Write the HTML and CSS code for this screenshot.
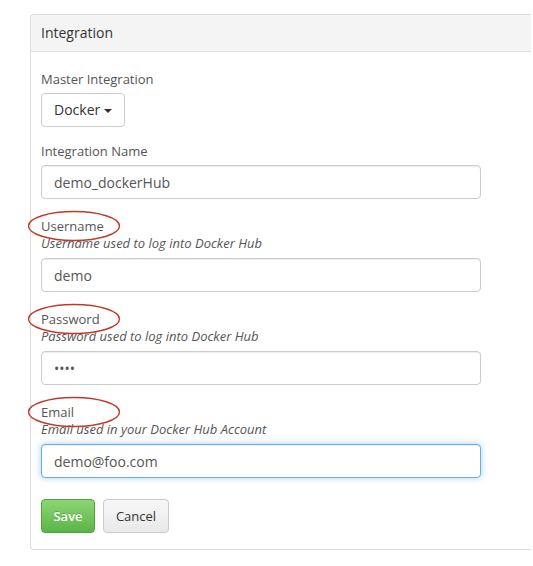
FILE: index.html
```html
<!DOCTYPE html>
<html>
<head>
<meta charset="utf-8">
<link rel="stylesheet" href="styles.css">
</head>
<body>
<div class="panel">
  <div class="panel-heading">Integration</div>
  <div class="panel-body">
    <div class="field field-select">
      <label class="lbl">Master Integration</label>
      <button class="btn btn-default dropdown">Docker<span class="caret"></span></button>
    </div>
    <div class="field">
      <label class="lbl">Integration Name</label>
      <input class="input" type="text" value="demo_dockerHub">
    </div>
    <div class="field">
      <label class="lbl lbl-tight"><span class="circle"><svg width="94" height="32" viewBox="0 0 94 32"><ellipse cx="47" cy="16" rx="45.5" ry="14.5"/></svg></span>Username</label>
      <div class="help">Username used to log into Docker Hub</div>
      <input class="input" type="text" value="demo">
    </div>
    <div class="field">
      <label class="lbl lbl-tight"><span class="circle"><svg width="94" height="32" viewBox="0 0 94 32"><ellipse cx="47" cy="16" rx="45.5" ry="14.5"/></svg></span>Password</label>
      <div class="help">Password used to log into Docker Hub</div>
      <input class="input" type="password" value="demo">
    </div>
    <div class="field field-last">
      <label class="lbl lbl-tight"><span class="circle"><svg width="94" height="32" viewBox="0 0 94 32"><ellipse cx="47" cy="16" rx="45.5" ry="14.5"/></svg></span>Email</label>
      <div class="help">Email used in your Docker Hub Account</div>
      <input class="input input-focus" type="text" value="demo@foo.com">
    </div>
    <div class="actions">
      <button class="btn btn-success">Save</button>
      <button class="btn btn-cancel">Cancel</button>
    </div>
  </div>
</div>
</body>
</html>
```

FILE: styles.css
```css
* { box-sizing: border-box; }
html, body { margin: 0; padding: 0; background: #fff; }
body {
  font-family: "Open Sans", "Noto Sans", sans-serif;
  color: #555;
  padding: 14px 0 0 30px;
}
.panel {
  width: 501px;
  border: 1px solid #ddd;
  border-right: none;
  border-radius: 4px 0 0 4px;
}
.panel-heading {
  background: #f4f4f4;
  border-bottom: 1px solid #ddd;
  padding: 8px 10px;
  font-size: 14px;
  line-height: 20px;
  color: #333;
  border-radius: 4px 0 0 0;
}
.panel-body {
  padding: 18px 10px 16px 10px;
}
.field { margin-bottom: 18px; }
.field-select { margin-bottom: 15px; }
.field-last { margin-bottom: 21px; }
.lbl {
  display: block;
  position: relative;
  font-size: 13px;
  line-height: 18px;
  margin-bottom: 5px;
  color: #555;
}
.lbl-tight { margin-bottom: 0; }
.circle {
  position: absolute;
  left: -14px;
  top: -7px;
  width: 94px;
  height: 32px;
}
.circle svg { display: block; }
.circle ellipse {
  fill: none;
  stroke: #c0392b;
  stroke-width: 1.4;
}
.help {
  font-size: 13px;
  font-style: italic;
  line-height: 16px;
  margin-bottom: 7px;
  color: #555;
}
.input {
  display: block;
  width: 440px;
  height: 34px;
  padding: 6px 12px;
  border: 1px solid #ccc;
  border-radius: 4px;
  font-family: "Open Sans", "Noto Sans", sans-serif;
  font-size: 14px;
  color: #555;
  background: #fff;
  box-shadow: inset 0 1px 1px rgba(0,0,0,0.075);
  outline: none;
}
.input-focus {
  border-color: #66afe9;
  box-shadow: inset 0 1px 1px rgba(0,0,0,0.075), 0 0 6px rgba(102,175,233,0.6);
}
.btn {
  display: inline-block;
  height: 34px;
  border-radius: 4px;
  font-family: "Open Sans", "Noto Sans", sans-serif;
  font-size: 14px;
  line-height: 20px;
  padding: 6px 12px;
  cursor: pointer;
  vertical-align: top;
  white-space: nowrap;
}
.btn-default {
  background: #fff;
  border: 1px solid #ccc;
  color: #333;
}
.dropdown { width: 84px; text-align: left; }
.caret {
  display: inline-block;
  width: 0;
  height: 0;
  margin-left: 4px;
  vertical-align: middle;
  border-top: 4px solid #333;
  border-left: 4px solid transparent;
  border-right: 4px solid transparent;
}
.actions { display: flex; gap: 8px; }
.btn-success {
  width: 54px;
  padding: 6px 0;
  color: #fff;
  font-weight: 600;
  font-size: 13px;
  background: linear-gradient(to bottom, #8dd672 0%, #5bb448 100%);
  border: 1px solid #4da53a;
  text-shadow: 0 -1px 0 rgba(0,0,0,0.2);
}
.btn-cancel {
  width: 66px;
  padding: 6px 0;
  color: #333;
  font-size: 13px;
  background: linear-gradient(to bottom, #f7f7f7 0%, #e9e9e9 100%);
  border: 1px solid #ccc;
}
```
